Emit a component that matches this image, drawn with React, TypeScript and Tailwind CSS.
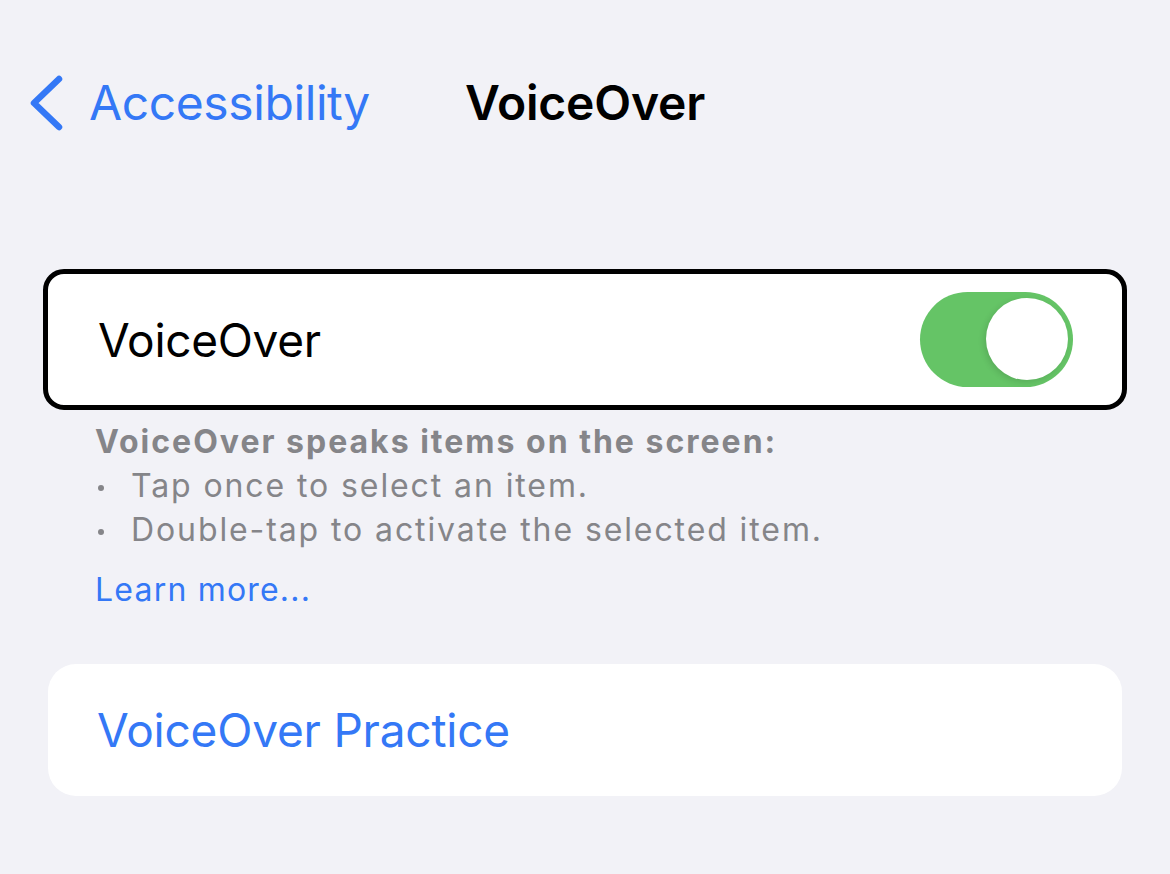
import React from "react";

export default function App() {
  return (
    <div className="w-[1170px] h-[874px] bg-[#f2f2f7] overflow-hidden font-['Inter','Noto_Sans',sans-serif]">
      {/* Nav bar */}
      <div className="grid grid-cols-[1fr_auto_1fr] items-center h-[90px] mt-[58px]">
        <div className="flex items-center pl-[28px] gap-[25px] text-[#3478f6]">
          <svg width="36" height="56" viewBox="0 0 36 56" fill="none">
            <path d="M31 4 L6 28 L31 52" stroke="#3478f6" strokeWidth="6.5" strokeLinecap="round" strokeLinejoin="round" />
          </svg>
          <span className="text-[48px] tracking-[-0.4px] leading-none">Accessibility</span>
        </div>
        <div className="text-[48px] font-semibold text-black leading-none tracking-[-0.2px]">VoiceOver</div>
        <div />
      </div>

      {/* Toggle card */}
      <div className="mx-[48px] mt-[126px] rounded-[16px] bg-white outline-[5px] outline-solid outline-black h-[131px] flex items-center justify-between pl-[50px] pr-[49px]">
        <span className="text-[46px] text-black leading-none tracking-[-0.3px]">VoiceOver</span>
        <div className="w-[153px] h-[95px] rounded-full bg-[#65c466] relative">
          <div className="absolute right-[5px] top-[6px] w-[82px] h-[82px] rounded-full bg-white shadow-[-2px_2px_6px_rgba(0,0,0,0.12)]" />
        </div>
      </div>

      {/* Footer */}
      <div className="px-[95px] pt-[15px] text-[#858589] text-[32px] leading-[44px] tracking-[1.9px]">
        <div className="font-bold tracking-[2px]">VoiceOver speaks items on the screen:</div>
        <div className="flex items-center">
          <span className="w-[36px] pl-[3px] flex items-center">
            <span className="block w-[6px] h-[6px] rounded-full bg-[#858589] mt-[4px]" />
          </span>
          <span>Tap once to select an item.</span>
        </div>
        <div className="flex items-center">
          <span className="w-[36px] pl-[3px] flex items-center">
            <span className="block w-[6px] h-[6px] rounded-full bg-[#858589] mt-[4px]" />
          </span>
          <span>Double-tap to activate the selected item.</span>
        </div>
        <div className="text-[#3478f6] mt-[16px] tracking-[1.2px]">Learn more...</div>
      </div>

      {/* Practice card */}
      <div className="mx-[48px] mt-[52px] rounded-[28px] bg-white h-[132px] flex items-center pl-[49px]">
        <span className="text-[46px] text-[#3478f6] leading-none tracking-[-0.2px]">VoiceOver Practice</span>
      </div>
    </div>
  );
}
